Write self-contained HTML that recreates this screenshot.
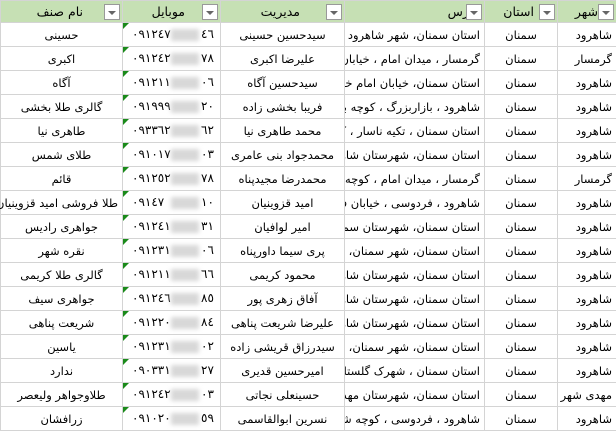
<!DOCTYPE html>
<html><head><meta charset="utf-8"><style>
body{margin:0;width:616px;height:429px;overflow:hidden;background:#fff;font-family:"DejaVu Sans","Liberation Sans",sans-serif;}
table{direction:rtl;border-collapse:collapse;table-layout:fixed;width:617px;font-size:11.5px;color:#000;}
td,th{border:1px solid #d4d4d4;height:23px;padding:0 4px;white-space:nowrap;overflow:hidden;}
th{background:#c6e0b4;font-weight:normal;height:21px;position:relative;text-align:right;font-size:12.5px}
th .dd{position:absolute;right:2px;top:3px;width:14px;height:14px;border:1px solid #999;background:#fff;}
th .dd:after{content:"";position:absolute;left:3px;top:6px;border-left:4px solid transparent;border-right:4px solid transparent;border-top:4px solid #666;}
td.c{text-align:center}
td.m{position:relative;font-size:12px}
td.m:before{content:"";position:absolute;left:0;top:0;border-top:6px solid #1a8a1a;border-right:6px solid transparent;}
.a{position:absolute;left:9px;top:4px}
.b{position:absolute;left:48px;top:6px;width:28px;height:12px;background:#d8d8d8;filter:blur(2px)}
.z{position:absolute;left:78px;top:4px}
td.o{overflow:visible;text-align:center}
</style></head><body>
<table>
<colgroup><col style="width:59px"><col style="width:73px"><col style="width:140px"><col style="width:124px"><col style="width:98px"><col style="width:122px"></colgroup>
<tr><th style="padding-right:18px">شهر<span class="dd"></span></th><th style="padding-right:23px">استان<span class="dd"></span></th><th style="padding-right:6px">آدرس<span class="dd"></span></th><th style="padding-right:44px">مدیریت<span class="dd"></span></th><th style="padding-right:35px">موبایل<span class="dd"></span></th><th style="padding-right:39px">نام صنف<span class="dd"></span></th></tr>
<tr><td>شاهرود</td><td class="c">سمنان</td><td>استان سمنان،  شهر شاهرود</td><td class="c">سیدحسین حسینی</td><td class="m"><span class="a">٠٩١٢٤٧</span><span class="b"></span><span class="z">٤٦</span></td><td class="c">حسینی</td></tr>
<tr><td>گرمسار</td><td class="c">سمنان</td><td>گرمسار ، میدان امام ، خیابان</td><td class="c">علیرضا اکبری</td><td class="m"><span class="a">٠٩١٢٤٢</span><span class="b"></span><span class="z">٧٨</span></td><td class="c">اکبری</td></tr>
<tr><td>شاهرود</td><td class="c">سمنان</td><td>استان سمنان، خیابان امام خمینی</td><td class="c">سیدحسین آگاه</td><td class="m"><span class="a">٠٩١٢١١</span><span class="b"></span><span class="z">٠٦</span></td><td class="c">آگاه</td></tr>
<tr><td>شاهرود</td><td class="c">سمنان</td><td>شاهرود ، بازاربزرگ ، کوچه بازار</td><td class="c">فریبا بخشی زاده</td><td class="m"><span class="a">٠٩١٩٩٩</span><span class="b"></span><span class="z">٢٠</span></td><td class="c">گالری طلا بخشی</td></tr>
<tr><td>شاهرود</td><td class="c">سمنان</td><td>استان سمنان ، تکیه ناسار ، کوچه تکیه</td><td class="c">محمد طاهری نیا</td><td class="m"><span class="a">٠٩٣٣٦٢</span><span class="b"></span><span class="z">٦٢</span></td><td class="c">طاهری نیا</td></tr>
<tr><td>شاهرود</td><td class="c">سمنان</td><td>استان سمنان، شهرستان شاهرود</td><td class="c">محمدجواد بنی عامری</td><td class="m"><span class="a">٠٩١٠١٧</span><span class="b"></span><span class="z">٠٣</span></td><td class="c">طلای شمس</td></tr>
<tr><td>گرمسار</td><td class="c">سمنان</td><td>گرمسار ، میدان امام ، کوچه شهید</td><td class="c">محمدرضا مجیدپناه</td><td class="m"><span class="a">٠٩١٢٥٢</span><span class="b"></span><span class="z">٧٨</span></td><td class="c">قائم</td></tr>
<tr><td>شاهرود</td><td class="c">سمنان</td><td>شاهرود ، فردوسی ، خیابان فردوسی</td><td class="c">امید قزوینیان</td><td class="m"><span class="a">٠٩١٤٧</span><span class="b"></span><span class="z">١٠</span></td><td class="o">طلا فروشی امید قزوینیان</td></tr>
<tr><td>شاهرود</td><td class="c">سمنان</td><td>استان سمنان، شهرستان سمنان</td><td class="c">امیر لوافیان</td><td class="m"><span class="a">٠٩١٢٤١</span><span class="b"></span><span class="z">٣١</span></td><td class="c">جواهری رادیس</td></tr>
<tr><td>شاهرود</td><td class="c">سمنان</td><td>استان سمنان،  شهر سمنان، خیابان</td><td class="c">پری سیما داورپناه</td><td class="m"><span class="a">٠٩١٢٣١</span><span class="b"></span><span class="z">٠٦</span></td><td class="c">نقره شهر</td></tr>
<tr><td>شاهرود</td><td class="c">سمنان</td><td>استان سمنان، شهرستان شاهرود</td><td class="c">محمود کریمی</td><td class="m"><span class="a">٠٩١٢١١</span><span class="b"></span><span class="z">٦٦</span></td><td class="c">گالری طلا کریمی</td></tr>
<tr><td>شاهرود</td><td class="c">سمنان</td><td>استان سمنان، شهرستان شاهرود</td><td class="c">آفاق زهری پور</td><td class="m"><span class="a">٠٩١٢٤٦</span><span class="b"></span><span class="z">٨٥</span></td><td class="c">جواهری سیف</td></tr>
<tr><td>شاهرود</td><td class="c">سمنان</td><td>استان سمنان، شهرستان شاهرود</td><td class="c">علیرضا شریعت پناهی</td><td class="m"><span class="a">٠٩١٢٢٠</span><span class="b"></span><span class="z">٨٤</span></td><td class="c">شریعت پناهی</td></tr>
<tr><td>شاهرود</td><td class="c">سمنان</td><td>استان سمنان،  شهر سمنان، خیابان</td><td class="c">سیدرزاق قریشی زاده</td><td class="m"><span class="a">٠٩١٢٣١</span><span class="b"></span><span class="z">٠٢</span></td><td class="c">یاسین</td></tr>
<tr><td>شاهرود</td><td class="c">سمنان</td><td>استان سمنان ، شهرک گلستان ، بلوار</td><td class="c">امیرحسین قدیری</td><td class="m"><span class="a">٠٩٠٣٣١</span><span class="b"></span><span class="z">٢٧</span></td><td class="c">ندارد</td></tr>
<tr><td>مهدی شهر</td><td class="c">سمنان</td><td>استان سمنان، شهرستان مهدیشهر</td><td class="c">حسینعلی نجاتی</td><td class="m"><span class="a">٠٩١٢٤٢</span><span class="b"></span><span class="z">٠٣</span></td><td class="c">طلاوجواهر ولیعصر</td></tr>
<tr><td>شاهرود</td><td class="c">سمنان</td><td>شاهرود ، فردوسی ، کوچه شهید</td><td class="c">نسرین ابوالقاسمی</td><td class="m"><span class="a">٠٩١٠٢٠</span><span class="b"></span><span class="z">٥٩</span></td><td class="c">زرافشان</td></tr>
</table>
</body></html>
